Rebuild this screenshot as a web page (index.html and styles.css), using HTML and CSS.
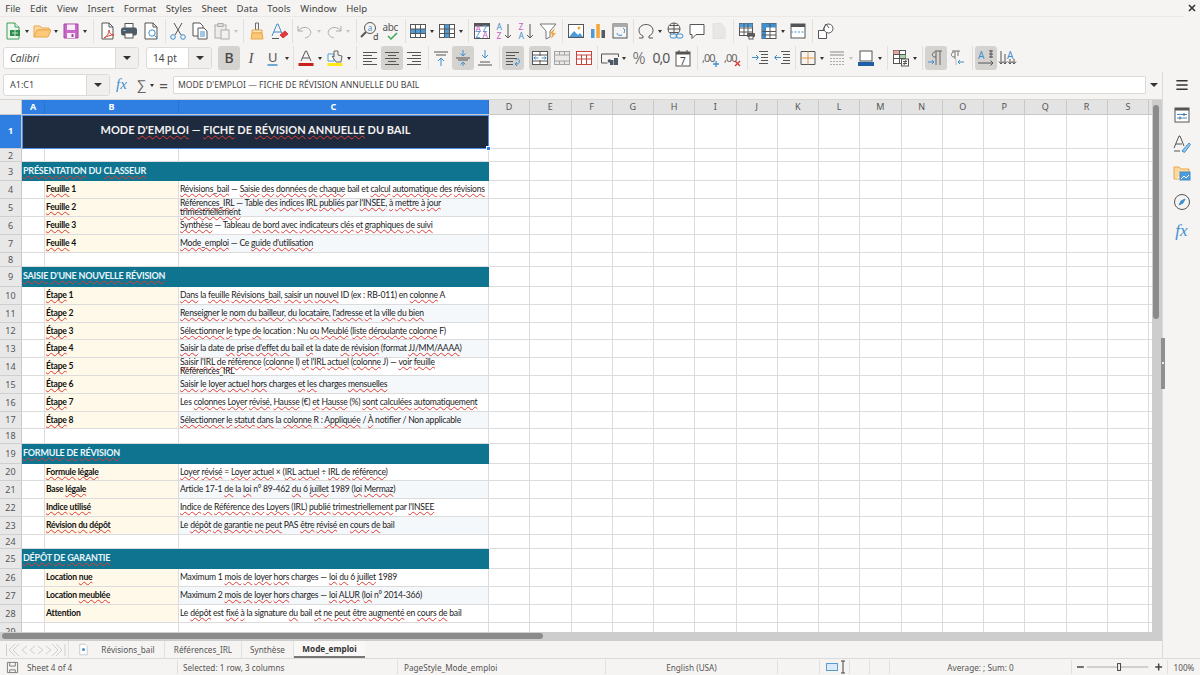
FILE: index.html
```html
<!DOCTYPE html>
<html lang="fr">
<head>
  <meta charset="utf-8">
  <title>Mode_emploi</title>
  <link rel="stylesheet" href="styles.css">
</head>
<body>
<div class="app">

  <!-- menu -->
  <div class="menubar">
    <span>File</span><span>Edit</span><span>View</span><span>Insert</span><span>Format</span><span>Styles</span><span>Sheet</span><span>Data</span><span>Tools</span><span>Window</span><span>Help</span>
    <svg class="closer" viewBox="0 0 8 8"><path d="M1 1l6 6M7 1l-6 6"/></svg>
  </div>

  <!-- standard toolbar -->
  <div class="toolbar tb1">
    <div class="ic"><svg viewBox="0 0 20 20"><path class="gr" d="M4 2h8l4 4v12H4z"/><path class="gr" d="M12 2v4h4"/><rect x="7" y="9" width="10" height="6" fill="#2f8f4e" stroke="none"/><path d="M9 12h6M12 9v6" stroke="#bfe5c9"/></svg></div><div class="dd"></div>
    <div class="ic"><svg viewBox="0 0 20 20"><path d="M2 16V5h6l2 2h7v2H6l-4 7z" fill="#fcd9a0" stroke="#e9a748"/><path d="M2 16l3-7h14l-3 7z" fill="#fdc978" stroke="#e9a748"/></svg></div><div class="dd"></div>
    <div class="ic"><svg viewBox="0 0 20 20"><path d="M3 3h14v14H3z" fill="#c968c6" stroke="#a548a3"/><rect x="6" y="3.500" width="8" height="5.500" fill="#fbeefb" stroke="none"/><rect x="6" y="12" width="8" height="5" fill="#fbeefb" stroke="none"/><rect x="10.500" y="13" width="2" height="3" fill="#a548a3" stroke="none"/></svg></div><div class="dd"></div>
    <div class="sep s7"></div>
    <div class="ic"><svg viewBox="0 0 20 20"><path d="M5 2h7l4 4v12H5z" fill="#fff"/><path d="M12 2v4h4"/><path d="M7 17c3-1 5-5 5-8 0 3 2 5 5 5-3 0-7 1-10 3z" stroke="#d9453d" fill="none"/></svg></div>
    <div class="ic"><svg viewBox="0 0 20 20"><rect x="6" y="2.500" width="8" height="5" fill="#fff"/><rect x="2.500" y="7" width="15" height="7" rx="1.500" fill="#4d5b68" stroke="#4d5b68"/><rect x="6" y="12" width="8" height="5" fill="#fff"/><path d="M4.500 9.500h2" stroke="#9fd0ef"/></svg></div>
    <div class="ic"><svg viewBox="0 0 20 20"><path d="M4 2h8l4 4v12H4z" fill="#fff"/><path d="M12 2v4h4"/><circle cx="11" cy="12" r="3.200" class="bl"/><path d="M13.500 14.500l3 3" class="bl"/></svg></div>
    <div class="sep s5"></div>
    <div class="ic"><svg viewBox="0 0 20 20"><path d="M6 2l7 12M14 2L7 14"/><circle cx="5" cy="16" r="2.300" class="bl"/><circle cx="15" cy="16" r="2.300" class="bl"/></svg></div>
    <div class="ic"><svg viewBox="0 0 20 20"><path d="M3 2h7l3 3v10H3z" fill="#fff"/><path d="M8 7h6l3 3v8H8z" fill="#fff"/><path d="M10 11h5M10 13h5M10 15h5" class="bl"/></svg></div>
    <div class="ic off"><svg viewBox="0 0 20 20"><rect x="3" y="4" width="11" height="13" fill="#e6e6e6"/><rect x="6" y="2.500" width="5" height="3" fill="#ccc"/><rect x="9" y="9" width="8" height="9" fill="#eee"/></svg></div><div class="dd off"></div>
    <div class="sep s6"></div>
    <div class="ic"><svg viewBox="0 0 20 20"><path d="M8.500 2h3v7h-3z" stroke="#6b6b6b"/><path d="M5 9h10v3H5z" fill="#fbe3bc" stroke="#e9a748"/><path d="M5 12h10l1 6H4z" fill="#fdc978" stroke="#e9a748"/></svg></div>
    <div class="ic"><svg viewBox="0 0 20 20"><path d="M3 15L8 3h1l5 12M5 11h7" class="bl"/><path d="M3 17.500h7" stroke="#555"/><path d="M11 14l5-4 3 3-5 4z" fill="#e0393e" stroke="#e0393e"/></svg></div>
    <div class="sep s4"></div>
    <div class="ic off"><svg viewBox="0 0 20 20"><path d="M3 5v5h5"/><path d="M3 10c3-4 9-5 12-1 2 3 0 7-5 8"/></svg></div><div class="dd off"></div>
    <div class="ic off"><svg viewBox="0 0 20 20"><path d="M17 5v5h-5"/><path d="M17 10c-3-4-9-5-12-1-2 3 0 7 5 8"/></svg></div><div class="dd off"></div>
    <div class="sep s7"></div>
    <div class="ic"><svg viewBox="0 0 20 20"><circle cx="10" cy="7" r="5.500"/><path d="M6 11l-5 5" stroke-width="2"/><text x="7.700" y="9.500" class="gl bt">a</text><text x="13" y="18.500" class="gl">d</text></svg></div>
    <div class="ic"><svg viewBox="0 0 20 20"><text x="0.500" y="10" class="gl abc">abc</text><path d="M6 15l3 3 6-6" stroke="#3aa655" stroke-width="1.500"/></svg></div>
    <div class="sep s4"></div>
    <div class="ic"><svg viewBox="0 0 20 20"><rect x="2.500" y="3.500" width="15" height="13" fill="#fff"/><rect x="2.500" y="8" width="15" height="4.500" fill="#4d9bd8" stroke="none"/><path d="M2.500 8h15M2.500 12.500h15M7.500 3.500v13M12.500 3.500v13"/></svg></div><div class="dd"></div>
    <div class="ic"><svg viewBox="0 0 20 20"><rect x="2.500" y="3.500" width="15" height="13" fill="#fff"/><rect x="7.500" y="3.500" width="5" height="13" fill="#4d9bd8" stroke="none"/><path d="M2.500 8h15M2.500 12.500h15M7.500 3.500v13M12.500 3.500v13"/></svg></div><div class="dd"></div>
    <div class="sep s6"></div>
    <div class="ic"><svg viewBox="0 0 20 20"><rect x="2.500" y="2.500" width="15" height="15" fill="#fff"/><rect x="2.500" y="2.500" width="15" height="3" fill="#555" stroke="none"/><text x="3.500" y="11" class="gl sm pk">A</text><text x="10.500" y="11" class="gl sm bf">Z</text><text x="3.500" y="17" class="gl sm bf">Z</text><text x="10.500" y="17" class="gl sm pk">A</text></svg></div>
    <div class="ic"><svg viewBox="0 0 20 20"><text x="2.500" y="9" class="gl sm bf">A</text><text x="2.500" y="17.500" class="gl sm pk">Z</text><path d="M14 3v14M11 14l3 3 3-3"/></svg></div>
    <div class="ic"><svg viewBox="0 0 20 20"><text x="2.500" y="9" class="gl sm pk">Z</text><text x="2.500" y="17.500" class="gl sm bf">A</text><path d="M14 3v14M11 14l3 3 3-3"/></svg></div>
    <div class="ic"><svg viewBox="0 0 20 20"><path d="M2 3h16l-6 7v6l-4 2v-8z" fill="#fff" stroke="#777"/><path d="M12 12l5-5-2 5h3l-5 6 1-5z" fill="#f2a63c" stroke="none"/></svg></div>
    <div class="sep s6"></div>
    <div class="ic"><svg viewBox="0 0 20 20"><rect x="2.500" y="3.500" width="15" height="13" fill="#fff"/><path d="M3 16l5-6 4 4 2-2 3 4z" fill="#4d9bd8" stroke="none"/><circle cx="13" cy="7" r="1.500" fill="#f2a63c" stroke="none"/></svg></div>
    <div class="ic"><svg viewBox="0 0 20 20"><rect x="3" y="8" width="3.500" height="9" fill="#4d9bd8" stroke="none"/><rect x="8.300" y="3" width="3.500" height="14" fill="#f2a63c" stroke="none"/><rect x="13.500" y="9" width="3.500" height="8" fill="#5a5a5a" stroke="none"/></svg></div>
    <div class="ic"><svg viewBox="0 0 20 20"><rect x="3" y="3" width="14" height="14" fill="#f4f4f4"/><rect x="3" y="3" width="14" height="3" fill="#aaa" stroke="none"/><path d="M7 12c0 2 2 3 5 2M13 7c2 1 2 3 1 5" class="bl"/></svg></div>
    <div class="sep s4"></div>
    <div class="ic"><svg viewBox="0 0 20 20"><path d="M3 17h4v-2C4.500 14 3 12 3 9.500 3 6 6 3.500 10 3.500S17 6 17 9.500c0 2.500-1.500 4.500-4 5.500v2h4"/></svg></div><div class="dd"></div>
    <div class="ic"><svg viewBox="0 0 20 20"><circle cx="9" cy="8" r="6"/><path d="M3 8h12M9 2v12M5 4.500h8M5 11.500h8"/><rect x="5" y="13" width="7" height="4" rx="2" class="bl" fill="#f5f4f2"/><rect x="11" y="13" width="7" height="4" rx="2" class="bl" fill="none"/></svg></div>
    <div class="ic"><svg viewBox="0 0 20 20"><path d="M3 3.500h14v10H9l-4 4v-4H3z" fill="#fff"/></svg></div>
    <div class="ic off"><svg viewBox="0 0 20 20"><path d="M4 2.500h8l4 4v11H4z" fill="#d9d9d9" stroke="#ccc"/></svg></div>
    <div class="sep s6"></div>
    <div class="ic"><svg viewBox="0 0 20 20"><rect x="2.500" y="2.500" width="13" height="12" fill="#fff"/><rect x="2.500" y="2.500" width="13" height="3.500" fill="#4d9bd8" stroke="none"/><path d="M7 2.500v12M11 2.500v12M2.500 7h13M2.500 11h13"/><rect x="10" y="12" width="8" height="4" rx="1" fill="#5a5a5a" stroke="none"/><rect x="12" y="15" width="4" height="3" fill="#fff"/></svg></div>
    <div class="ic"><svg viewBox="0 0 20 20"><rect x="3" y="2.500" width="14" height="15" fill="#fff"/><rect x="3" y="2.500" width="14" height="4" fill="#3f8fce" stroke="none"/><rect x="3" y="2.500" width="4" height="15" fill="#3f8fce" stroke="none"/><path d="M11 2.500v15M3 10.500h14M3 14h14"/></svg></div><div class="dd"></div>
    <div class="ic"><svg viewBox="0 0 20 20"><rect x="3" y="3" width="14" height="14" fill="#fff"/><rect x="3" y="3" width="14" height="3" fill="#555" stroke="none"/><path d="M3 11h14" class="bl" stroke-dasharray="2 1.500"/></svg></div>
    <div class="sep s6"></div>
    <div class="ic"><svg viewBox="0 0 20 20"><path d="M2.500 9.500h8v8h-8z" fill="#fff"/><circle cx="12.500" cy="7.500" r="4.500" fill="#fff"/><path d="M7 9l3-6 3 4"/></svg></div>
  </div>

  <!-- formatting toolbar -->
  <div class="toolbar tb2">
    <div class="combo fontbox"><span class="italic">Calibri</span><i></i></div>
    <div class="combo sizebox"><span>14 pt</span><i></i></div>
    <div class="ic on"><span class="lt bold">B</span></div>
    <div class="ic"><span class="lt ital">I</span></div>
    <div class="ic"><svg viewBox="0 0 20 20"><text x="5" y="13.500" class="gl und">U</text><path d="M4.500 17h10" class="bl" stroke-width="1.500"/></svg></div><div class="dd"></div>
    <div class="sep s4"></div>
    <div class="ic"><svg viewBox="0 0 20 20"><path d="M5 13L9.500 3h1L15 13M6.500 10h7"/><rect x="2.500" y="15" width="15" height="3" fill="#c9211e" stroke="none"/></svg></div><div class="dd"></div>
    <div class="ic"><svg viewBox="0 0 20 20"><rect x="2.500" y="15" width="15" height="3" fill="#ffe81c" stroke="none"/><path d="M3 6h6v7H3z" stroke="#4d9bd8" fill="#fff"/><path d="M9 3v6l-2-1 4 6h5l1-6-4-1V3z" fill="#eee" stroke="#666"/></svg></div><div class="dd"></div>
    <div class="sep s6"></div>
    <div class="ic"><svg viewBox="0 0 20 20"><path d="M3 4.500h14M3 7.500h9M3 10.500h14M3 13.500h9M3 16.500h14"/></svg></div>
    <div class="ic on"><svg viewBox="0 0 20 20"><path d="M3 4.500h14M6 7.500h8M3 10.500h14M6 13.500h8M3 16.500h14"/></svg></div>
    <div class="ic"><svg viewBox="0 0 20 20"><path d="M3 4.500h14M8 7.500h9M3 10.500h14M8 13.500h9M3 16.500h14"/></svg></div>
    <div class="sep s5"></div>
    <div class="ic"><svg viewBox="0 0 20 20"><path d="M3 4h14M5 7h10"/><path d="M10 18v-8M7 13l3-3 3 3" class="bl"/></svg></div>
    <div class="ic on"><svg viewBox="0 0 20 20"><path d="M3 10h14M5 12h10" /><path d="M10 2v6M7.500 5.500L10 8l2.500-2.500M10 18v-4M7.500 16.500L10 14l2.500 2.500" class="bl"/></svg></div>
    <div class="ic"><svg viewBox="0 0 20 20"><path d="M3 17h14M5 14h10"/><path d="M10 2v8M7 7l3 3 3-3" class="bl"/></svg></div>
    <div class="sep s6"></div>
    <div class="ic on"><svg viewBox="0 0 20 20"><path d="M3 4.500h13M3 7.500h9M3 10.500h11M3 13.500h7M3 16.500h7"/><path d="M12 11h3c2 0 2 5-1 5h-1M14 14l-2 2 2 2" class="bl"/></svg></div>
    <div class="gap5"></div>
    <div class="ic on"><svg viewBox="0 0 20 20"><rect x="2.500" y="3.500" width="15" height="13" fill="#fff"/><path d="M2.500 7h15M2.500 13h15M10 3.500V8M10 12v4.500"/><path d="M3.500 10h5M16.500 10h-5M5.500 8.500L4 10l1.500 1.500M14.500 8.500L16 10l-1.500 1.500" class="bl"/></svg></div>
    <div class="ic"><svg viewBox="0 0 20 20" class="faint"><rect x="2.500" y="3.500" width="15" height="13" fill="#e2e2e2"/><path d="M2.500 7h15M2.500 13h15M7.500 3.500V7M12.500 3.500V7M7.500 13v3.500M12.500 13v3.500"/></svg></div>
    <div class="ic"><svg viewBox="0 0 20 20" class="redg"><rect x="2.500" y="3.500" width="15" height="13" fill="#fff"/><path d="M2.500 7h15M7.500 7v9.500M12.500 7v9.500M2.500 11h15" /></svg></div>
    <div class="sep s4"></div>
    <div class="ic"><svg viewBox="0 0 20 20"><path d="M1.500 6h17v3M1.500 6v9h6"/><circle cx="9.500" cy="13" r="1.800" fill="#4d5b68" stroke="none"/><rect x="10" y="12" width="3.500" height="5" fill="#4d5b68" stroke="none"/><rect x="14" y="10" width="4" height="7" fill="#4d5b68" stroke="none"/></svg></div><div class="dd"></div>
    <div class="ic txt"><span class="lt big">%</span></div>
    <div class="ic txt"><span class="lt num">0,0</span></div>
    <div class="ic"><svg viewBox="0 0 20 20"><rect x="3" y="4" width="14" height="14" fill="#fff"/><rect x="3" y="4" width="14" height="2.500" fill="#555" stroke="none"/><path d="M6 2v3M14 2v3"/><text x="7" y="16.500" class="gl sv">7</text></svg></div>
    <div class="sep s6"></div>
    <div class="ic"><svg viewBox="0 0 20 20"><text x="1" y="14" class="gl dc">,00</text><path d="M15 13v6M12 16h6" class="bl" stroke-width="1.300"/></svg></div>
    <div class="ic"><svg viewBox="0 0 20 20"><text x="1" y="14" class="gl dc">,00</text><path d="M12 13l5 5M17 13l-5 5" stroke="#d9362f" stroke-width="1.300"/></svg></div>
    <div class="sep s5"></div>
    <div class="ic"><svg viewBox="0 0 20 20"><path d="M9 3.500h9M11 6.500h7M11 9.500h7M11 12.500h7M9 15.500h9"/><path d="M2 9.500h6M6 7l2.500 2.500L6 12" class="bl"/></svg></div>
    <div class="ic"><svg viewBox="0 0 20 20"><path d="M9 3.500h9M11 6.500h7M11 9.500h7M11 12.500h7M9 15.500h9"/><path d="M3 9.500h6M5 7L2.500 9.500 5 12" class="bl"/></svg></div>
    <div class="sep s4"></div>
    <div class="ic"><svg viewBox="0 0 20 20"><path d="M3 3.500h14v13H3z"/><path d="M10 3.500v13M3 10h14" stroke="#e09a45"/></svg></div><div class="dd"></div>
    <div class="ic off"><svg viewBox="0 0 20 20"><path d="M3 4h14M3 7h14" stroke-width="1.500"/><path d="M3 10.500h14M3 13.500h14M3 16.500h14" stroke-dasharray="2 1"/></svg></div><div class="dd off"></div>
    <div class="ic"><svg viewBox="0 0 20 20"><rect x="4" y="3" width="12" height="10" fill="#fff"/><rect x="2" y="14" width="16" height="4" fill="#1f5fa6" stroke="none"/></svg></div><div class="dd"></div>
    <div class="sep s6"></div>
    <div class="ic"><svg viewBox="0 0 20 20"><rect x="2.500" y="2.500" width="12" height="13" fill="#fff"/><rect x="2.500" y="2.500" width="6" height="4" fill="#e5a5a1" stroke="none"/><rect x="8.500" y="6.500" width="6" height="4" fill="#a8d5a9" stroke="none"/><path d="M2.500 6.500h12M2.500 10.500h12M8.500 2.500v13"/><rect x="10.500" y="11" width="7" height="7" fill="#fff"/><path d="M12 13.500h4M12 15.500h4M15 12l-2 5"/></svg></div><div class="dd"></div>
    <div class="sep s6"></div>
    <div class="ic on"><svg viewBox="0 0 20 20"><path d="M9 4c-3 0-4 5 0 5h1M10 3v14M14 3v14M9 3h7" stroke="#666"/><path d="M2 14h6M6 12l2 2-2 2" class="bl"/></svg></div>
    <div class="ic"><svg viewBox="0 0 20 20"><path d="M6 4c-3 0-4 5 0 5h1M7 3v8M10 3v5M4 3h8" stroke="#777"/><path d="M16 14h-6M12 12l-2 2 2 2" class="bl"/><path d="M8 17v-6" stroke="#bbb"/></svg></div>
    <div class="sep s6"></div>
    <div class="ic on"><svg viewBox="0 0 20 20"><text x="2" y="11" class="gl sx bf">A</text><path d="M13 3h4M13 6h4M13 9h4M15 2v8" stroke="#555"/><path d="M2 15h15M14.500 12.500L17 15l-2.500 2.500"/></svg></div>
    <div class="ic"><svg viewBox="0 0 20 20"><text x="9" y="11" class="gl sx bf">A</text><path d="M3 3v13M1 13.500L3 16l2-2.500M7 6v10M5 13.500L7 16l2-2.500M12 11v5M10 13.500l2 2.500 2-2.500M16 11v5M14 13.500l2 2.500 2-2.500" /></svg></div>
  </div>

  <div class="work">
    <div class="main">

      <!-- formula bar -->
      <div class="formulabar">
        <div class="combo namebox"><span>A1:C1</span><i></i></div>
        <div class="fx">fx</div>
        <div class="sigma">∑</div>
        <div class="dd"></div>
        <div class="equal">=</div>
        <div class="formula">MODE D'EMPLOI — FICHE DE RÉVISION ANNUELLE DU BAIL</div>
        <div class="dd formula-dd"></div>
      </div>

      <div class="sheetwrap">
        <div class="sheet">
          <div class="colhead">
            <span class="rh corner"></span>
            <span class="ch wa sel">A</span><span class="ch wb sel">B</span><span class="ch wc sel">C</span>
            <span class="ch">D</span><span class="ch">E</span><span class="ch">F</span><span class="ch">G</span><span class="ch">H</span><span class="ch">I</span><span class="ch">J</span><span class="ch">K</span><span class="ch">L</span><span class="ch">M</span><span class="ch">N</span><span class="ch">O</span><span class="ch">P</span><span class="ch">Q</span><span class="ch">R</span><span class="ch">S</span>
          </div>

          <div class="row h34"><span class="rh sel">1</span><span class="title">MODE <u>D'EMPLOI</u> — <u>FICHE</u> DE <u>RÉVISION</u> <u>ANNUELLE</u> DU BAIL<b class="handle"></b></span><span class="rest"></span></div>
          <div class="row h13"><span class="rh">2</span><span class="ca"></span><span class="cb"></span><span class="cc"></span><span class="rest"></span></div>
          <div class="row h19"><span class="rh">3</span><span class="band"><u>PRÉSENTATION</u> DU <u>CLASSEUR</u></span><span class="rest"></span></div>
          <div class="row h18"><span class="rh">4</span><span class="ca"></span><span class="cb"><u>Feuille</u> 1</span><span class="cc"><u>Révisions_bail</u> — <u>Saisie</u> <u>des</u> <u>données</u> <u>de</u> <u>chaque</u> bail et <u>calcul</u> <u>automatique</u> <u>des</u> <u>révisions</u></span><span class="rest"></span></div>
          <div class="row h18"><span class="rh">5</span><span class="ca"></span><span class="cb"><u>Feuille</u> 2</span><span class="cc alt two"><u>Références_IRL</u> — Table <u>des</u> <u>indices</u> <u>IRL</u> <u>publiés</u> par <u>l'INSEE</u>, <u>à</u> <u>mettre</u> <u>à</u> <u>jour</u> <u>trimestriellement</u></span><span class="rest"></span></div>
          <div class="row h18"><span class="rh">6</span><span class="ca"></span><span class="cb"><u>Feuille</u> 3</span><span class="cc"><u>Synthèse</u> — Tableau <u>de</u> <u>bord</u> <u>avec</u> <u>indicateurs</u> <u>clés</u> <u>et</u> <u>graphiques</u> <u>de</u> <u>suivi</u></span><span class="rest"></span></div>
          <div class="row h18"><span class="rh">7</span><span class="ca"></span><span class="cb"><u>Feuille</u> 4</span><span class="cc alt"><u>Mode_emploi</u> — Ce <u>guide</u> <u>d'utilisation</u></span><span class="rest"></span></div>
          <div class="row h14"><span class="rh">8</span><span class="ca"></span><span class="cb"></span><span class="cc"></span><span class="rest"></span></div>
          <div class="row h20"><span class="rh">9</span><span class="band"><u>SAISIE</u> <u>D'UNE</u> <u>NOUVELLE</u> <u>RÉVISION</u></span><span class="rest"></span></div>
          <div class="row h178"><span class="rh">10</span><span class="ca"></span><span class="cb"><u>Étape</u> 1</span><span class="cc"><u>Dans</u> la <u>feuille</u> <u>Révisions_bail</u>, <u>saisir</u> <u>un</u> <u>nouvel</u> ID (ex : RB-011) en <u>colonne</u> A</span><span class="rest"></span></div>
          <div class="row h178"><span class="rh">11</span><span class="ca"></span><span class="cb"><u>Étape</u> 2</span><span class="cc alt"><u>Renseigner</u> <u>le</u> <u>nom</u> <u>du</u> <u>bailleur</u>, <u>du</u> <u>locataire</u>, <u>l'adresse</u> <u>et</u> la <u>ville</u> <u>du</u> <u>bien</u></span><span class="rest"></span></div>
          <div class="row h178"><span class="rh">12</span><span class="ca"></span><span class="cb"><u>Étape</u> 3</span><span class="cc"><u>Sélectionner</u> <u>le</u> type <u>de</u> location : Nu <u>ou</u> <u>Meublé</u> (<u>liste</u> <u>déroulante</u> <u>colonne</u> F)</span><span class="rest"></span></div>
          <div class="row h178"><span class="rh">13</span><span class="ca"></span><span class="cb"><u>Étape</u> 4</span><span class="cc alt"><u>Saisir</u> la date <u>de</u> <u>prise</u> <u>d'effet</u> <u>du</u> bail <u>et</u> la date <u>de</u> <u>révision</u> (format <u>JJ/MM/AAAA</u>)</span><span class="rest"></span></div>
          <div class="row h178"><span class="rh">14</span><span class="ca"></span><span class="cb"><u>Étape</u> 5</span><span class="cc two"><u>Saisir</u> <u>l'IRL</u> <u>de</u> <u>référence</u> (<u>colonne</u> I) <u>et</u> <u>l'IRL</u> <u>actuel</u> (<u>colonne</u> J) — <u>voir</u> <u>feuille</u> <u>Références_IRL</u></span><span class="rest"></span></div>
          <div class="row h178"><span class="rh">15</span><span class="ca"></span><span class="cb"><u>Étape</u> 6</span><span class="cc alt"><u>Saisir</u> <u>le</u> <u>loyer</u> <u>actuel</u> <u>hors</u> charges <u>et</u> <u>les</u> charges <u>mensuelles</u></span><span class="rest"></span></div>
          <div class="row h178"><span class="rh">16</span><span class="ca"></span><span class="cb"><u>Étape</u> 7</span><span class="cc">Les <u>colonnes</u> <u>Loyer</u> <u>révisé</u>, <u>Hausse</u> (€) <u>et</u> <u>Hausse</u> (%) <u>sont</u> <u>calculées</u> <u>automatiquement</u></span><span class="rest"></span></div>
          <div class="row h178"><span class="rh">17</span><span class="ca"></span><span class="cb"><u>Étape</u> 8</span><span class="cc alt"><u>Sélectionner</u> <u>le</u> <u>statut</u> <u>dans</u> la <u>colonne</u> R : <u>Appliquée</u> / <u>À</u> notifier / Non applicable</span><span class="rest"></span></div>
          <div class="row h142"><span class="rh">18</span><span class="ca"></span><span class="cb"></span><span class="cc"></span><span class="rest"></span></div>
          <div class="row h20"><span class="rh">19</span><span class="band"><u>FORMULE</u> <u>DE</u> <u>RÉVISION</u></span><span class="rest"></span></div>
          <div class="row h178"><span class="rh">20</span><span class="ca"></span><span class="cb"><u>Formule</u> <u>légale</u></span><span class="cc"><u>Loyer</u> <u>révisé</u> = <u>Loyer</u> <u>actuel</u> × (<u>IRL</u> <u>actuel</u> ÷ <u>IRL</u> <u>de</u> <u>référence</u>)</span><span class="rest"></span></div>
          <div class="row h178"><span class="rh">21</span><span class="ca"></span><span class="cb">Base <u>légale</u></span><span class="cc alt">Article 17-1 <u>de</u> la <u>loi</u> n° 89-462 <u>du</u> 6 <u>juillet</u> 1989 (<u>loi</u> <u>Mermaz</u>)</span><span class="rest"></span></div>
          <div class="row h178"><span class="rh">22</span><span class="ca"></span><span class="cb"><u>Indice</u> <u>utilisé</u></span><span class="cc"><u>Indice</u> <u>de</u> <u>Référence</u> <u>des</u> <u>Loyers</u> (<u>IRL</u>) <u>publié</u> <u>trimestriellement</u> par <u>l'INSEE</u></span><span class="rest"></span></div>
          <div class="row h178"><span class="rh">23</span><span class="ca"></span><span class="cb"><u>Révision</u> <u>du</u> <u>dépôt</u></span><span class="cc alt">Le <u>dépôt</u> <u>de</u> <u>garantie</u> <u>ne</u> <u>peut</u> PAS <u>être</u> <u>révisé</u> en <u>cours</u> <u>de</u> bail</span><span class="rest"></span></div>
          <div class="row h142"><span class="rh">24</span><span class="ca"></span><span class="cb"></span><span class="cc"></span><span class="rest"></span></div>
          <div class="row h20"><span class="rh">25</span><span class="band"><u>DÉPÔT</u> <u>DE</u> <u>GARANTIE</u></span><span class="rest"></span></div>
          <div class="row h18"><span class="rh">26</span><span class="ca"></span><span class="cb">Location <u>nue</u></span><span class="cc">Maximum 1 <u>mois</u> <u>de</u> <u>loyer</u> <u>hors</u> charges — <u>loi</u> <u>du</u> 6 <u>juillet</u> 1989</span><span class="rest"></span></div>
          <div class="row h18"><span class="rh">27</span><span class="ca"></span><span class="cb">Location <u>meublée</u></span><span class="cc alt">Maximum 2 <u>mois</u> <u>de</u> <u>loyer</u> <u>hors</u> charges — <u>loi</u> <u>ALUR</u> (<u>loi</u> n° 2014-366)</span><span class="rest"></span></div>
          <div class="row h18"><span class="rh">28</span><span class="ca"></span><span class="cb">Attention</span><span class="cc">Le <u>dépôt</u> est <u>fixé</u> <u>à</u> la signature <u>du</u> bail <u>et</u> <u>ne</u> <u>peut</u> <u>être</u> <u>augmenté</u> en <u>cours</u> <u>de</u> bail</span><span class="rest"></span></div>
          <div class="row h18"><span class="rh">29</span><span class="ca"></span><span class="cb"></span><span class="cc"></span><span class="rest"></span></div>
        </div>
        <div class="vscroll"><div class="vthumb"></div></div>
      </div>

      <div class="hscroll"><div class="hthumb"></div></div>

      <!-- sheet tabs -->
      <div class="tabbar">
        <div class="tabnav">
          <svg viewBox="0 0 62 14"><path d="M1.500 1v12M10 1L4 7l6 6M14 1L8 7l6 6M22 3l-5 4 5 4M30 3l-5 4 5 4M33 3l5 4-5 4M41 3l5 4-5 4M47 1l6 6-6 6M51 1l6 6-6 6M60 1v12"/></svg>
        </div>
        <div class="addtab"><svg viewBox="0 0 12 16"><path d="M1 1h7l3 3v11H1z"/><circle cx="6" cy="8" r="2" fill="#3f8fce" stroke="none"/></svg></div>
        <div class="tab t1">Révisions_bail</div>
        <div class="tab t2">Références_IRL</div>
        <div class="tab t3">Synthèse</div>
        <div class="tab t4 active">Mode_emploi</div>
      </div>
    </div>

    <!-- sidebar -->
    <div class="sidebar">
      <svg class="sb menu" viewBox="0 0 20 20"><path d="M2 4h16M2 10h16M2 16h16" stroke-width="2"/></svg>
      <svg class="sb" viewBox="0 0 20 20"><rect x="3" y="3" width="14" height="14" fill="#fff"/><rect x="3" y="3" width="14" height="2.500" fill="#555" stroke="none"/><path d="M5 9.500h10M5 13h10" class="bl"/><path d="M12 8v3M8 11.500v3"/></svg>
      <svg class="sb" viewBox="0 0 20 20"><path d="M2 14L7 2h1l4 10M4 10h6"/><path d="M2 17h6"/><path d="M10 17l7-8 1.500 1.500-6 8z" class="bl" fill="#9cc8ea"/></svg>
      <svg class="sb" viewBox="0 0 20 20"><path d="M2 16V4h5l2 2h8v3" fill="#fcd9a0" stroke="#e9a748"/><rect x="8" y="9" width="10" height="8" fill="#4d9bd8" stroke="#3f8fce"/><path d="M2 16h6" stroke="#e9a748"/><path d="M9 16l3-3 2 2 3-3" stroke="#fff"/></svg>
      <svg class="sb" viewBox="0 0 20 20"><circle cx="10" cy="10" r="7.500"/><path d="M7 13l2-4 4-2-2 4z" fill="#3f8fce" stroke="#3f8fce"/></svg>
      <div class="sb sbfx">fx</div>
    </div>
    <div class="deckhandle"><b></b></div>
  </div>

  <!-- status bar -->
  <div class="statusbar">
    <div class="st st1"><svg viewBox="0 0 14 14"><path d="M1.500 1.500h11v11h-11z"/><path d="M4 1.500v4h6v-4M4 12.500v-3h6v3"/></svg><span>Sheet 4 of 4</span></div>
    <div class="st st2">Selected: 1 row, 3 columns</div>
    <div class="st st3">PageStyle_Mode_emploi</div>
    <div class="st st4">English (USA)</div>
    <div class="st st5"></div>
    <div class="st st6"><svg viewBox="0 0 22 14"><rect x="0.500" y="3.500" width="11" height="7" fill="#dcebf7" stroke="#5a9bd0"/><path d="M15 1h4M15 13h4M17 1v12" stroke="#444"/></svg></div>
    <div class="st st7"></div>
    <div class="st st8"></div>
    <div class="st st10">Average: ; Sum: 0</div>
    <div class="st st11">
      <svg viewBox="0 0 92 12"><path d="M0 6h7M80 6h7M83.500 2.500v7" stroke-width="1.500"/><path d="M10 6h63" stroke="#aaa"/><rect x="41.500" y="2.500" width="3" height="7" fill="#f5f4f2"/></svg>
    </div>
    <div class="st st12">100%</div>
  </div>

</div>
</body>
</html>
```

FILE: styles.css
```css
* {
  box-sizing: border-box;
}

html, body {
  margin: 0;
  height: 100%;
  overflow: hidden;
}

body {
  background-color: #f5f4f2;
  color: #3c3c3c;
  font-family: "Noto Sans", sans-serif;
  font-size: 9.5px;
}

.app {
  display: flex;
  flex-direction: column;
  width: 1200px;
  height: 675px;
}

/* menu */
.menubar {
  display: flex;
  align-items: center;
  position: relative;
  height: 17px;
  margin-right: 16px;
  padding-left: 1px;
  padding-top: 1px;
  font-size: 9.600px;
  color: #444;
  border-bottom: 1px solid #ebe9e6;
}

.menubar span {
  padding: 0 5.400px 0 4.200px;
}

.closer {
  position: absolute;
  right: -12px;
  top: 4px;
  width: 8px;
  height: 8px;
  fill: none;
  stroke: #333;
  stroke-width: 1.600;
}

/* toolbars */
.toolbar {
  display: flex;
  align-items: center;
  padding-left: 2px;
}

.tb1 {
  height: 27px;
}

.tb2 {
  height: 28px;
  padding-left: 3px;
}

.ic {
  display: flex;
  flex: none;
  align-items: center;
  justify-content: center;
  width: 22px;
  height: 24px;
  border-radius: 3px;
}

.ic svg {
  width: 20px;
  height: 20px;
  fill: none;
  stroke: #555;
  stroke-width: 1;
}

.ic.on {
  background-color: #d5d3d0;
}

.ic.off {
  opacity: 0.45;
}

.gr {
  stroke: #3f9e56;
  fill: #eef7f0;
}

.bl {
  stroke: #3f8fce;
}

.faint {
  opacity: 0.5;
}

.ic svg.redg {
  stroke: #c9423c;
}

.dd {
  position: relative;
  flex: none;
  width: 7px;
  height: 24px;
}

.dd::after {
  content: "";
  position: absolute;
  left: 1px;
  top: 11px;
  border-left: 2.500px solid transparent;
  border-right: 2.500px solid transparent;
  border-top: 3px solid #333;
}

.dd.off::after {
  border-top-color: #c4c4c4;
}

.sep {
  position: relative;
  flex: none;
  height: 24px;
}

.sep::after {
  content: "";
  position: absolute;
  left: 50%;
  top: 0;
  width: 1px;
  height: 24px;
  background-color: #e2e0dd;
}

.s4 { width: 4px; }
.s5 { width: 5px; }
.s6 { width: 6px; }
.s7 { width: 7px; }

.gap5 {
  flex: none;
  width: 5px;
}

/* text inside toolbar glyphs */
.gl {
  font-family: "Noto Sans", sans-serif;
  font-size: 9px;
  fill: #444;
  stroke: none;
}

.gl.bt { font-size: 8px; fill: #3f8fce; }
.gl.abc { font-size: 10px; letter-spacing: -0.400px; fill: #555; }
.gl.sm { font-size: 8.500px; }
.gl.pk { fill: #c75cc4; }
.gl.bf { fill: #3f8fce; }
.gl.und { font-size: 13px; fill: #555; }
.gl.sv { font-size: 10px; fill: #444; }
.gl.dc { font-size: 11px; letter-spacing: -1px; fill: #666; }
.gl.sx { font-size: 10px; }

.lt {
  color: #555;
  line-height: 1;
}

.lt.bold {
  font-size: 14px;
  font-weight: 500;
  color: #444;
}

.lt.ital {
  font-family: "Liberation Serif", serif;
  font-size: 15px;
  font-style: italic;
}

.lt.big {
  font-size: 16px;
  font-weight: 300;
}

.lt.num {
  font-size: 14px;
  letter-spacing: -1px;
}

/* combo boxes */
.combo {
  display: flex;
  flex: none;
  align-items: center;
  height: 22px;
  background-color: #fff;
  border: 1px solid #dcdad7;
  border-radius: 3px;
  font-size: 10px;
  color: #444;
}

.combo span {
  flex: 1;
  padding-left: 6px;
}

.combo i {
  position: relative;
  flex: none;
  width: 23px;
  height: 100%;
  background-color: #f0efed;
  border-left: 1px solid #dcdad7;
  border-radius: 0 3px 3px 0;
}

.combo i::after {
  content: "";
  position: absolute;
  left: 7px;
  top: 8px;
  border-left: 4px solid transparent;
  border-right: 4px solid transparent;
  border-top: 4px solid #333;
}

.fontbox {
  width: 136px;
  margin-right: 7px;
}

.fontbox .italic {
  font-style: italic;
}

.sizebox {
  width: 66px;
  margin-right: 6px;
}

.namebox {
  width: 107px;
  margin-left: 3px;
  font-size: 9px;
}

/* main area */
.work {
  display: flex;
  flex: 1;
  position: relative;
  min-height: 0;
}

.main {
  display: flex;
  flex-direction: column;
  width: 1162px;
  min-height: 0;
}

.formulabar {
  display: flex;
  align-items: center;
  height: 28px;
  padding-bottom: 2px;
  border-bottom: 1px solid #d8d6d3;
}

.fx {
  width: 18px;
  margin-left: 6px;
  font-family: "Liberation Serif", serif;
  font-size: 15px;
  font-style: italic;
  color: #3f8fce;
}

.sigma {
  width: 15px;
  font-size: 14px;
  color: #666;
  text-align: center;
}

.equal {
  width: 15px;
  font-size: 15px;
  font-weight: 600;
  color: #555;
  text-align: center;
}

.formula {
  flex: 1;
  height: 18px;
  margin-left: 2px;
  padding-left: 4px;
  background-color: #fff;
  border: 1px solid #dcdad7;
  border-radius: 1px;
  font-size: 8.650px;
  line-height: 16px;
  color: #444;
}

.formula-dd {
  width: 15px;
  margin-left: 1px;
}

.formula-dd::after {
  left: 3px;
  top: 10px;
  border-left-width: 4px;
  border-right-width: 4px;
  border-top-width: 4px;
}

.sheetwrap {
  display: flex;
  flex: 1;
  min-height: 0;
}

.sheet {
  flex: none;
  width: 1152px;
  height: 533px;
  overflow: hidden;
  background-color: #fff;
  font-family: Lato, sans-serif;
  font-size: 8.600px;
  letter-spacing: -0.230px;
  color: #1b1b1b;
}

.colhead {
  display: flex;
  height: 15px;
  background-color: #e3e3e3;
  border-bottom: 1px solid #c8c8c8;
  font-family: "Noto Sans", sans-serif;
  font-size: 9px;
  letter-spacing: 0;
  line-height: 14px;
  color: #555;
}

.ch {
  flex: none;
  width: 41.250px;
  text-align: center;
  border-right: 1px solid #c8c8c8;
}

.colhead .wa { width: 23px; }
.colhead .wb { width: 134px; }
.colhead .wc { width: 310px; }

.colhead .sel {
  background-color: #2f7fe2;
  color: #fff;
  font-weight: 700;
  border-right-color: #2a73cf;
}

.row {
  display: flex;
  align-items: stretch;
}

.h34 { height: 34px; }
.h13 { height: 13px; }
.h19 { height: 19px; }
.h18 { height: 18px; }
.h14 { height: 14px; }
.h20 { height: 20px; }
.h178 { height: 17.800px; }
.h142 { height: 14.200px; }

.rh {
  flex: none;
  width: 22px;
  display: flex;
  align-items: center;
  justify-content: center;
  background-color: #e8e8e8;
  border-bottom: 1px solid #cfcfcf;
  border-right: 1px solid #c8c8c8;
  font-family: "Noto Sans", sans-serif;
  font-size: 9px;
  letter-spacing: 0;
  color: #555;
}

.rh.sel {
  padding-bottom: 2px;
  background-color: #2f7fe2;
  color: #fff;
  font-weight: 700;
}

.rh.corner {
  background-color: #f0f0f0;
  border-bottom: none;
}

.ca, .cb, .cc {
  flex: none;
  border-right: 1px solid #dcdcdc;
  border-bottom: 1px solid #dcdcdc;
  line-height: 9px;
}

.ca {
  width: 23px;
}

.cb {
  width: 134px;
  padding-left: 1px;
  font-weight: 700;
  color: #111;
}

.cb:not(:empty) {
  padding-top: 4px;
  background-color: #fff9e9;
}

.cc {
  width: 310px;
  padding-left: 1px;
  padding-right: 1px;
}

.cc:not(:empty) {
  padding-top: 4px;
}

.cc.two {
  padding-top: 0;
}

.cc.alt {
  background-color: #f5f8fb;
}

u {
  text-decoration: underline wavy #e23a34 1px;
  text-underline-offset: 1px;
  text-decoration-skip-ink: none;
}

.title {
  flex: none;
  position: relative;
  width: 467px;
  background-color: #1e2a3e;
  border: 1px solid #4d90e8;
  font-size: 11px;
  font-weight: 700;
  letter-spacing: 0;
  line-height: 27px;
  color: #f2f2f2;
  text-align: center;
}

.handle {
  position: absolute;
  right: -3px;
  bottom: -3px;
  width: 5px;
  height: 5px;
  background-color: #2f7fe2;
  border: 1px solid #fff;
}

.band {
  flex: none;
  width: 467px;
  padding-left: 1px;
  background-color: #0e7490;
  font-size: 9px;
  font-weight: 700;
  line-height: 17px;
  color: #eaf6fa;
}

.rest {
  flex: 1;
  border-bottom: 1px solid #dcdcdc;
  background-image: repeating-linear-gradient(90deg, transparent 0, transparent 40.250px, #dcdcdc 40.250px, #dcdcdc 41.250px);
}

.vscroll {
  position: relative;
  flex: none;
  width: 10px;
  background-color: #cdcdcd;
}

.vthumb {
  position: absolute;
  left: 1px;
  top: 5px;
  width: 6px;
  height: 214px;
  background-color: #8b8b8b;
  border-radius: 3px;
}

.hscroll {
  position: relative;
  flex: none;
  height: 9px;
  background-color: #cdcdcd;
}

.hthumb {
  position: absolute;
  left: 2px;
  top: 1px;
  width: 541px;
  height: 6px;
  background-color: #8b8b8b;
  border-radius: 3px;
}

/* sheet tabs */
.tabbar {
  display: flex;
  flex: none;
  align-items: stretch;
  height: 17px;
  font-size: 8.200px;
  color: #555;
}

.tabnav {
  display: flex;
  align-items: center;
  width: 69px;
  padding-left: 5px;
  border-right: 1px solid #e2e0dd;
}

.tabnav svg {
  width: 62px;
  height: 14px;
  fill: none;
  stroke: #d0cfcc;
}

.addtab {
  display: flex;
  align-items: center;
  width: 22px;
  padding-left: 10px;
}

.addtab svg {
  width: 9px;
  height: 13px;
  fill: #fff;
  stroke: #bbb;
}

.tab {
  display: flex;
  flex: none;
  align-items: center;
  justify-content: center;
  border-right: 1px solid #e2e0dd;
}

.t1 { width: 73px; margin-left: 1px; }
.t2 { width: 77px; }
.t3 { width: 52px; }
.t4 { width: 71px; }

.tab.active {
  border-right: none;
  border-bottom: 2px solid #777;
  background-color: #f9f8f7;
  font-weight: 700;
  color: #333;
}

/* sidebar */
.sidebar {
  display: flex;
  flex: 1;
  flex-direction: column;
  align-items: center;
  padding-top: 3px;
  gap: 9px;
  border-left: 1px solid #dcdad7;
}

.sb {
  flex: none;
  width: 20px;
  height: 20px;
  fill: none;
  stroke: #555;
  stroke-width: 1;
}

.sb.menu {
  width: 14px;
  height: 14px;
  margin: 3px 0 4px;
  stroke: #333;
  stroke-width: 1.400;
}

.sbfx {
  font-family: "Liberation Serif", serif;
  font-size: 17px;
  font-style: italic;
  line-height: 20px;
  color: #3f8fce;
  text-align: center;
}

.deckhandle {
  position: absolute;
  left: 1161px;
  top: 266px;
  width: 4px;
  height: 51px;
  background-color: #8f8f8f;
}

.deckhandle b {
  position: absolute;
  left: 1px;
  top: 24px;
  width: 2px;
  height: 2px;
  background-color: #eee;
}

/* status bar */
.statusbar {
  display: flex;
  flex: none;
  align-items: center;
  height: 17px;
  border-top: 1px solid #dcdad7;
  font-size: 8.200px;
  color: #555;
}

.st {
  display: flex;
  flex: none;
  align-items: center;
  height: 14px;
  border-right: 1px solid #e2e0dd;
  white-space: nowrap;
}

.st svg {
  fill: none;
  stroke: #777;
}

.st1 { width: 178px; padding-left: 6px; gap: 8px; }
.st1 svg { width: 13px; height: 13px; }
.st2 { width: 220px; padding-left: 5px; }
.st3 { width: 208px; padding-left: 6px; }
.st4 { width: 172px; justify-content: center; }
.st5 { width: 42px; }
.st6 { width: 30px; padding-left: 6px; }
.st6 svg { width: 22px; height: 14px; }
.st7 { width: 20px; }
.st8 { width: 20px; }
.st10 { width: 182px; justify-content: center; }
.st11 { width: 96px; padding-left: 5px; }
.st11 svg { width: 92px; height: 12px; stroke: #444; }
.st12 { flex: 1; justify-content: center; border-right: none; }
```
